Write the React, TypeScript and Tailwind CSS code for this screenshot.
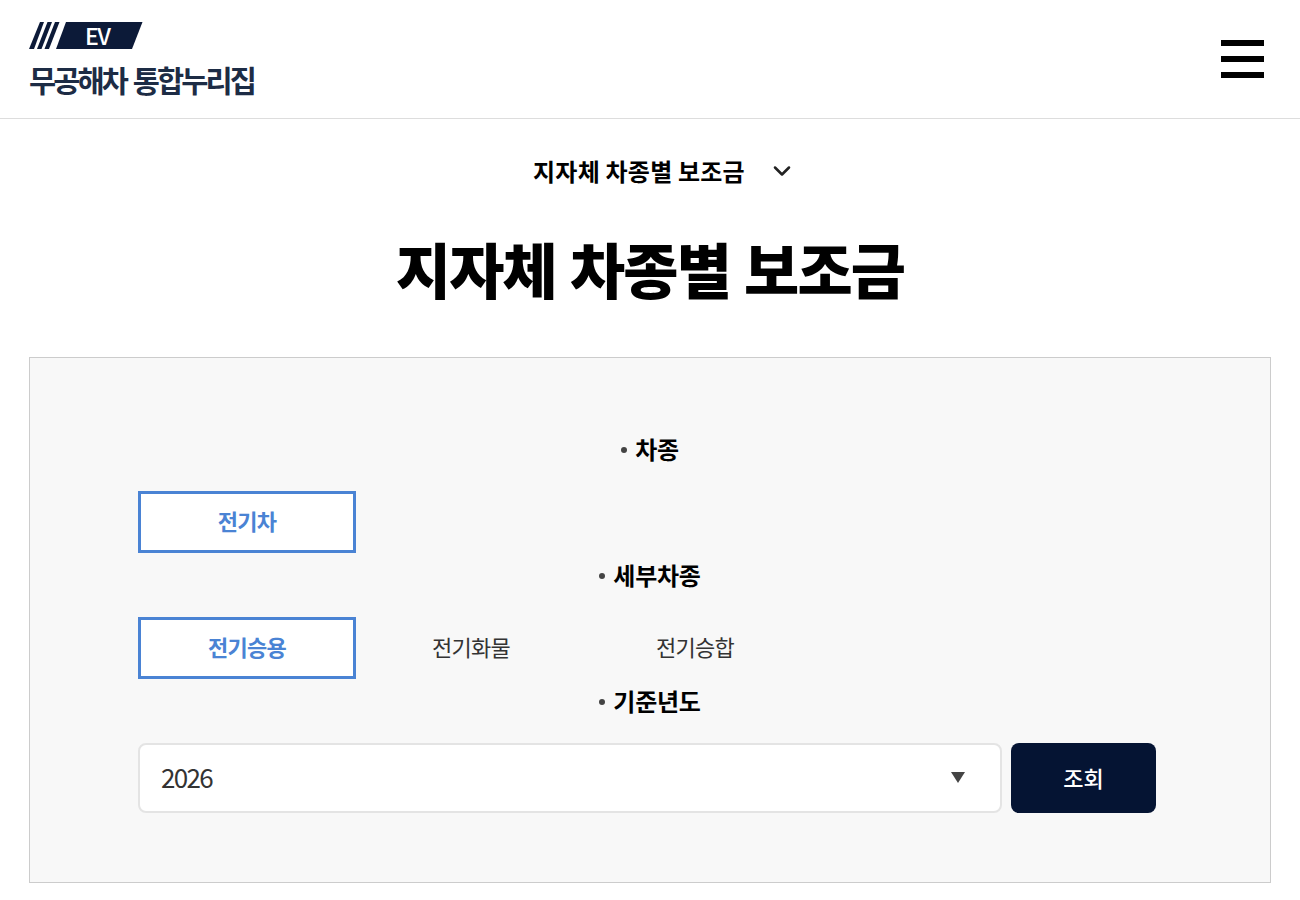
import { ChevronDown } from "lucide-react";

const font = "font-['Noto_Sans_CJK_KR','Noto_Sans',sans-serif]";

function Logo() {
  return (
    <div className="flex flex-col pt-[1px]">
      <div className="relative h-[28px] w-[114px]">
        <svg width="114" height="28" viewBox="0 0 114 28" className="block">
          <polygon points="0,27 5,27 15,0 11,0" fill="#0c1a38" />
          <polygon points="8,27 12.5,27 23,0 18.5,0" fill="#0c1a38" />
          <polygon points="15.5,27 20,27 30.5,0 26,0" fill="#0c1a38" />
          <polygon points="27,27 103,27 113.5,0 37,0" fill="#0c1a38" />
        </svg>
        <span className="absolute left-[56px] top-[-1px] text-[23px] leading-[28px] font-medium tracking-[-1.5px] text-white">
          EV
        </span>
      </div>
      <span className="mt-[11px] text-[29.5px] leading-[36px] font-bold tracking-[-2.9px] [word-spacing:3px] text-[#1d2c45] whitespace-nowrap">
        무공해차 통합누리집
      </span>
    </div>
  );
}

function SectionLabel({ children }: { children: React.ReactNode }) {
  return (
    <div className="flex h-[46px] items-center justify-center gap-[8px] mb-[18px] pb-[2px]">
      <span className="mt-[2px] h-[6px] w-[6px] rounded-full bg-[#444]" />
      <span className="text-[24px] font-bold tracking-[-0.25px] text-black">{children}</span>
    </div>
  );
}

function Tab({ label, active }: { label: string; active?: boolean }) {
  return (
    <button
      type="button"
      className={
        active
          ? "h-[62px] w-[218px] mr-[6px] border-[3px] border-[#4a83d4] bg-white pb-[4px] text-[22px] font-bold tracking-[-0.7px] text-[#4a83d4]"
          : "h-[62px] w-[218px] mr-[6px] pb-[4px] text-[22px] tracking-[-0.7px] text-[#333]"
      }
    >
      {label}
    </button>
  );
}

export default function App() {
  return (
    <div className={`min-h-screen bg-white pb-[17px] ${font}`}>
      <header className="flex h-[119px] items-center justify-between border-b border-[#ddd] pl-[29px] pr-[36px]">
        <Logo />
        <div className="flex w-[43px] flex-col gap-[10px]">
          <span className="h-[6px] bg-black" />
          <span className="h-[6px] bg-black" />
          <span className="h-[6px] bg-black" />
        </div>
      </header>

      <div className="flex h-[104px] items-center justify-center gap-[23px] pl-[29px]">
        <span className="text-[24px] font-bold tracking-[0.2px] text-black">지자체 차종별 보조금</span>
        <ChevronDown className="h-[28px] w-[28px] text-[#222]" strokeWidth={2.2} />
      </div>

      <h1 className="text-center text-[60px] leading-[90px] font-black tracking-[-1.8px] [word-spacing:2px] text-black">
        지자체 차종별 보조금
      </h1>

      <section className="mx-[29px] mt-[44px] border border-[#ccc] bg-[#f8f8f8] py-[69px]">
        <div className="mx-auto w-[1024px]">
          <SectionLabel>차종</SectionLabel>
          <div className="flex">
            <Tab label="전기차" active />
          </div>
          <SectionLabel>세부차종</SectionLabel>
          <div className="flex">
            <Tab label="전기승용" active />
            <Tab label="전기화물" />
            <Tab label="전기승합" />
          </div>
          <SectionLabel>기준년도</SectionLabel>
          <div className="flex gap-[9px]">
            <div className="relative flex h-[70px] w-[864px] items-center rounded-[8px] border-2 border-[#e4e4e4] bg-white pb-[3px] pl-[21px] text-[26px] tracking-[-1.7px] text-[#333]">
              2026
              <span className="absolute right-[35px] top-[27px] h-0 w-0 border-x-[7px] border-t-[11px] border-x-transparent border-t-[#444]" />
            </div>
            <button
              type="button"
              className="h-[70px] w-[145px] rounded-[8px] bg-[#051433] pb-[2px] text-[22px] font-medium text-white"
            >
              조회
            </button>
          </div>
        </div>
      </section>
    </div>
  );
}
